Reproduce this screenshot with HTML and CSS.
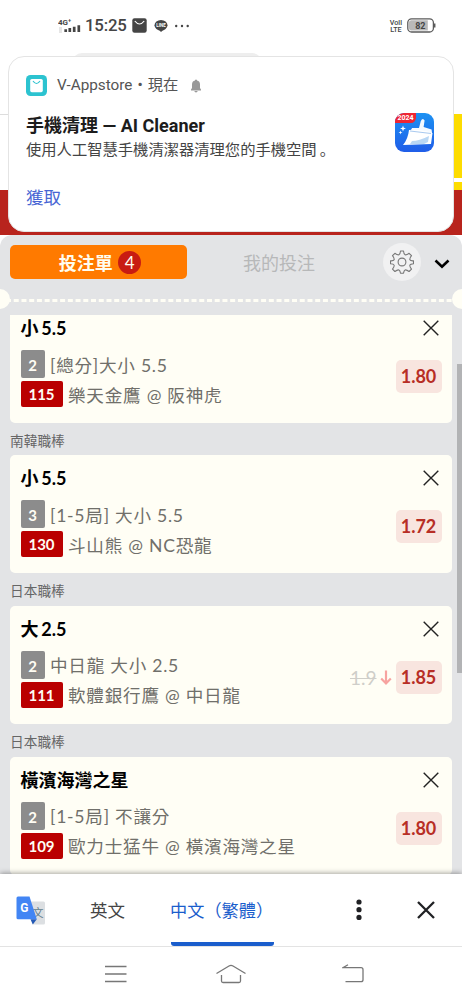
FILE: index.html
```html
<!DOCTYPE html>
<html lang="zh-Hant">
<head>
<meta charset="utf-8">
<title>投注單</title>
<link rel="stylesheet" href="styles.css">
</head>
<body>
<svg class="defs" width="0" height="0"><defs>
  <symbol id="cross" viewBox="0 0 16 16"><path d="M.7.7l14.6 14.6M15.3.7L.7 15.3" fill="none" stroke="#222" stroke-width="1.4"/></symbol>
</defs></svg>
<div class="phone">
  <header class="site">
    <div class="status">
      <svg class="signal" width="24" height="18" viewBox="0 0 24 18"><text x="0" y="7" class="net">4G⁺</text><path d="M1 10h3M1 12h3M1 14h3" stroke="#ccc" stroke-width="1"/><path d="M7.7 11.200v2.800M11.800 10v4M16.200 8.700v5.300M20.800 7.300v6.700" stroke="#454545" stroke-width="2.700"/></svg>
      <span class="time">15:25</span>
      <svg class="bag" width="15" height="15" viewBox="0 0 15 15"><rect x=".3" y=".3" width="14.4" height="14.4" rx="2.2" fill="#454545"/><path d="M2.800 3q4.700 6 9.400 0" fill="none" stroke="#fff" stroke-width="1.2"/></svg>
      <svg class="line" width="14" height="14" viewBox="0 0 14 14"><ellipse cx="7" cy="6.2" rx="6.5" ry="5.300" fill="#454545"/><path d="M5 11l2 2 4-3.4z" fill="#454545"/><text x="7" y="8" class="line-text">LINE</text></svg>
      <svg class="more" width="16" height="4" viewBox="0 0 16 4"><g fill="#454545"><circle cx="2.2" cy="2" r="1.2"/><circle cx="8" cy="2" r="1.2"/><circle cx="13.7" cy="2" r="1.2"/></g></svg>
      <span class="lte"><b>Voll</b><b>LTE</b></span>
      <svg class="battery" width="29" height="15" viewBox="0 0 29 15"><rect x=".8" y=".8" width="25.6" height="13.2" rx="3.8" fill="#fff" stroke="#5b5b5b" stroke-width="1.3"/><path d="M4 2.2h16.8v10.4H4q-2-.4-2-2V4.300q0-1.700 2-2.100z" fill="#b9b9b9"/><path d="M27.700 5.500v4" stroke="#5b5b5b" stroke-width="1.500"/><text x="13.300" y="10.500" class="pct">82</text></svg>
    </div>
    <div class="site-body"><div class="rule"></div><div class="promo"><i></i></div></div>
    <div class="site-red"></div>
    <div class="shade"></div>
    <section class="notice">
      <div class="source">
        <svg width="21" height="21" viewBox="0 0 21 21"><rect width="21" height="21" rx="4.500" fill="#2cc3d0"/><rect x="4.200" y="4" width="12.600" height="13.200" rx="1.600" fill="#fff"/><path d="M7 6q3.500 5 7 0" fill="none" stroke="#2cc3d0" stroke-width="1.200"/></svg>
        <span>V-Appstore・現在</span>
        <svg width="12" height="14" viewBox="0 0 12 14"><path d="M1 11.500v-1l1-1.500V5.500Q2 1.800 5 1.400V.700h2v.7q3 .4 3 4.100V9l1 1.500v1zM4.300 12h3.400q-.3 1.400-1.700 1.400T4.300 12z" fill="#999"/></svg>
      </div>
      <div class="message">
        <div><h1>手機清理 — AI Cleaner</h1><p>使用人工智慧手機清潔器清理您的手機空間<span class="stop" lang="zh-Hans">。</span></p></div>
        <svg width="39" height="39" viewBox="0 0 39 39"><defs><linearGradient id="sky" x2="0" y2="1"><stop stop-color="#1c91f2"/><stop offset="1" stop-color="#205de8"/></linearGradient><clipPath id="tile"><rect width="39" height="39" rx="9"/></clipPath></defs><g clip-path="url(#tile)"><rect width="39" height="39" fill="url(#sky)"/><path d="M0 0h21v5q-1 5-5 5H0z" fill="#ee2633"/><path d="M24 15l1.800-7q2-4 3.800-.4L28.600 14l8 2.500.500 4-22-2 2-3.500z" fill="#f5faff"/><path d="M14 17q10-1 23.500 3L36 31l-28 1q5-6 6-15z" fill="#fff"/><path d="M17 28q7 0 17-5l-1 6-4 2H15z" fill="#b9d7f4"/><path d="M15 18l21 2.500" stroke="#a8c9ef"/><path d="M8 12.500l.8 2.200 2.200.8-2.200.8-.8 2.200-.8-2.200-2.200-.8 2.200-.8zM5.500 17.500l.5 1.500 1.500.5-1.500.5-.5 1.500-.5-1.500-1.500-.5 1.500-.5z" fill="#fff"/><text x="2.500" y="7.200" class="year">2024</text></g></svg>
      </div>
      <div class="get">獲取</div>
    </section>
  </header>

  <main class="slip">
    <nav class="tabs">
      <div class="tab active">投注單<b>4</b></div>
      <div class="tab">我的投注</div>
      <div class="gear"><svg width="24" height="24" viewBox="1 1 24 24" fill="none" stroke="#777" stroke-width="1.1"><circle cx="13" cy="13" r="3.900"/><path d="M11.500 2h3q.3 3.300 1.600 3.800t4-1.500l2.400 2.400q-2.100 2.700-1.600 4t3.600 1.100v2.900q-3.100.3-3.600 1.400t1.600 4l-2.400 2.400q-2.800-2-4-1.500T14.500 24.200h-3q-.3-2.700-1.600-3.200t-4 1.500L3.500 20.100q2.100-2.800 1.600-4T1.500 14.700v-2.900q3.100.2 3.600-1.100t-1.600-4l2.400-2.400q2.700 2 4 1.500T11.500 2z" stroke-linejoin="round"/></svg></div>
      <svg class="chevron" width="16" height="10" viewBox="0 0 16 10"><path d="M1.500 1.500L8 7.600l6.500-6.100" fill="none" stroke="#000" stroke-width="2.600"/></svg>
    </nav>
    <div class="tear"><svg width="462" height="21"><path d="M8 11.500h446" stroke="#fffef5" stroke-width="3" stroke-dasharray="5 2.730" stroke-dashoffset="2"/><circle cx="0" cy="10" r="10" fill="#fffef5"/><circle cx="462" cy="10" r="10" fill="#fffef5"/></svg></div>
    <div class="list">
      <article class="bet first"><div class="title"><h2>小 5.5</h2><svg width="16" height="16"><use href="#cross"/></svg></div><div class="detail"><div class="lines"><p><b class="kind">2</b>[總分]大小 5.5</p><p><b class="num">115</b>樂天金鷹 @ 阪神虎</p></div><strong>1.80</strong></div></article>
      <h3>南韓職棒</h3>
      <article class="bet"><div class="title"><h2>小 5.5</h2><svg width="16" height="16"><use href="#cross"/></svg></div><div class="detail"><div class="lines"><p><b class="kind">3</b>[1-5局] 大小 5.5</p><p><b class="num">130</b>斗山熊 @ NC恐龍</p></div><strong>1.72</strong></div></article>
      <h3>日本職棒</h3>
      <article class="bet"><div class="title"><h2>大 2.5</h2><svg width="16" height="16"><use href="#cross"/></svg></div><div class="detail"><div class="lines"><p><b class="kind">2</b>中日龍 大小 2.5</p><p><b class="num">111</b>軟體銀行鷹 @ 中日龍</p></div><s>1.9</s><svg class="down" width="12" height="15" viewBox="0 0 12 15"><path d="M6 .5v13M1.200 8.500L6 13.400l4.800-4.900" fill="none" stroke="#f7a3a0" stroke-width="2.200"/></svg><strong>1.85</strong></div></article>
      <h3>日本職棒</h3>
      <article class="bet"><div class="title"><h2>橫濱海灣之星</h2><svg width="16" height="16"><use href="#cross"/></svg></div><div class="detail"><div class="lines"><p><b class="kind">2</b>[1-5局] 不讓分</p><p><b class="num">109</b>歐力士猛牛 @ 橫濱海灣之星</p></div><strong>1.80</strong></div></article>
    </div>
    <div class="scroll"></div>
  </main>

  <footer class="translate">
    <svg class="gt" width="29" height="29" viewBox="0 0 29 29"><path d="M10 5.500h17.500q1.500 0 1.500 1.500v20q0 1.500-1.500 1.500H17z" fill="#dcdfe2"/><text x="16.500" y="21" class="wen">文</text><path d="M14.500 23.200h6.300l-4 5.300z" fill="#2459b5"/><path d="M2 .5h11.500l7.300 22.700H2q-1.500 0-1.500-1.500V2Q.5.500 2 .5z" fill="#4285f4"/><text x="4.200" y="16" class="g">G</text></svg>
    <div class="lang">英文</div>
    <div class="lang on">中文（繁體）</div>
    <svg class="dots" width="6" height="22" viewBox="0 0 6 22"><g fill="#202124"><circle cx="3" cy="3" r="2.600"/><circle cx="3" cy="10.700" r="2.600"/><circle cx="3" cy="18.400" r="2.600"/></g></svg>
    <svg class="close" width="18" height="18" viewBox="0 0 18 18"><path d="M1 1l16 16M17 1L1 17" stroke="#202124" stroke-width="2.300"/></svg>
  </footer>
  <div class="system">
    <svg width="22" height="18" viewBox="0 0 22 18"><path d="M0 1.500h21.500M0 9h21.500M0 16.500h21.500" stroke="#777" stroke-width="1.400"/></svg>
    <svg class="home" width="32" height="20" viewBox="0 0 32 20"><path d="M1.500 9.500L14 2q2-1.200 4 0l12.500 7.500M6.500 11v6q0 1.500 1.500 1.500h16q1.500 0 1.500-1.500v-6" fill="none" stroke="#777" stroke-width="1.300"/></svg>
    <svg width="22" height="19" viewBox="0 0 22 19"><path d="M6 .8L1 3.700h18q2 0 2 2v10q0 2-2 2H3.500" fill="none" stroke="#777" stroke-width="1.300"/></svg>
  </div>
</div>
</body>
</html>
```
FILE: styles.css
```css
* { box-sizing: border-box; }
body { margin: 0; background: #fff; font-family: Lato, "Noto Sans CJK TC", sans-serif; }
h1, h2, h3, p { margin: 0; }
svg { display: block; flex: none; }
.defs { position: absolute; }
.phone { width: 462px; height: 1000px; display: flex; flex-direction: column; overflow: hidden; }

.site { position: relative; height: 235px; flex: none; display: flex; flex-direction: column; background: #fff; }
.status { height: 56px; padding: 16px 26px 0 58px; display: flex; align-items: flex-start; font-family: Roboto, sans-serif; color: #454545; }
.signal { margin-top: 2px; }
.net { font: 700 8px Roboto, sans-serif; fill: #454545; }
.time { margin-left: 3px; width: 43px; font-size: 16.800px; line-height: 19px; font-weight: 500; letter-spacing: -.2px; }
.bag { margin: 2px 0 0 4px; }
.line { margin: 3px 0 0 7px; }
.line-text { font: 700 4.500px Roboto, sans-serif; fill: #fff; text-anchor: middle; }
.more { margin: 8px 0 0 6px; }
.lte { margin: 3px 5px 0 auto; display: flex; flex-direction: column; align-items: center; font-size: 7.200px; line-height: 7px; }
.lte b { font-weight: 500; }
.battery { margin-top: 2px; }
.pct { font: 700 9px Roboto, sans-serif; fill: #454545; text-anchor: middle; }
.site-body { height: 134px; padding-top: 58px; display: flex; justify-content: space-between; }
.rule { width: 10px; height: 1px; background: #ddd; }
.promo { width: 8px; height: 76px; background: #fddc00; padding-top: 64px; }
.promo i { display: block; height: 4px; background: #fff; }
.site-red { flex: 1; background: #b8241d; }
.shade { position: absolute; left: 72px; top: 53px; width: 190px; height: 20px; border-radius: 10px; background: #eee; }
.notice { position: absolute; left: 8px; top: 56px; width: 446px; height: 176px; padding: 18px 19px 0 17px; border: 1px solid #e4e4e4; border-radius: 16px; background: #fff; font-family: Roboto, "Noto Sans CJK TC", sans-serif; }
.source { display: flex; align-items: center; height: 21px; color: #555; font-size: 15.300px; line-height: 21px; }
.source span { margin: 0 12px 0 10px; }
.message { display: flex; justify-content: space-between; margin-top: 17px; }
.message h1 { font-size: 18px; line-height: 24px; padding-top: 1px; font-weight: 700; color: #1c1c1c; }
.message p { height: 22px; font-size: 15.300px; line-height: 21px; color: #444; }
.stop { font-family: "Noto Sans CJK SC", sans-serif; margin-left: 3px; }
.year { font: 700 7px Roboto, sans-serif; fill: #fff; }
.get { margin-top: 26px; font-size: 17.500px; line-height: 24px; color: #4865d4; }

.slip { position: relative; height: 639px; flex: none; overflow: hidden; background: #e3e4e6; border-radius: 12px 12px 0 0; }
.tabs { height: 54px; padding: 0 12px 0 10px; display: flex; align-items: center; }
.tab { width: 184px; height: 34px; display: flex; align-items: center; justify-content: center; font-size: 18px; color: #b7b8b9; }
.tab.active { width: 177px; padding-left: 3px; border-radius: 5px; background: #ff7a00; color: #fffdf0; font-weight: 700; }
.tab b { width: 23px; height: 23px; margin-left: 5.500px; border-radius: 50%; background: #c81c12; font-size: 17px; line-height: 23px; font-weight: 400; text-align: center; }
.gear { width: 38px; height: 38px; margin-left: 12px; border-radius: 50%; background: #f1f1f2; display: flex; align-items: center; justify-content: center; }
.chevron { margin-left: 13px; margin-top: 3px; }
.tear { height: 26px; }
.list { height: 559px; padding: 0 10px; overflow: hidden; }
.bet { width: 442px; height: 118px; border-radius: 5px; background: #fffef5; padding: 10px 11px 0 10.500px; }
.bet.first { height: 107.500px; padding-top: 0; border-radius: 0 0 5px 5px; }
.title { height: 26px; padding: 0 2.500px 0 0; display: flex; justify-content: space-between; align-items: center; }
.title h2 { font-size: 18px; font-weight: 700; line-height: 26px; color: #000; word-spacing: -1.500px; }
.detail { display: flex; align-items: center; height: 71px; margin-right: -.5px; }
.lines { flex: 1; padding-top: 5px; }
.lines p { display: flex; align-items: center; height: 30px; font-size: 17.600px; letter-spacing: .75px; color: #706f6a; font-weight: 400; white-space: nowrap; }
.lines b { color: #fffdf4; border-radius: 2px; letter-spacing: 0; text-align: center; }
.kind { width: 24px; height: 28px; margin-right: 5.500px; font-size: 15px; line-height: 30px; background: #8c8c8c; }
.num { width: 42px; height: 26px; margin-right: 5.500px; font-size: 15px; line-height: 27px; background: #ba0000; }
.detail strong { width: 46px; height: 33px; border-radius: 5px; background: #f8e5df; color: #b72e25; font-size: 18px; line-height: 33px; text-align: center; }
.detail s { font-size: 19px; color: #cfcec9; }
.down { margin: 0 4px 0 3px; }
.list h3 { height: 32.700px; font-size: 13.700px; line-height: 36px; font-weight: 400; color: #666; }
.scroll { position: absolute; right: 0; top: 129px; width: 5px; height: 309px; background: #b2b3b5; }

.translate { position: relative; height: 73px; flex: none; padding: 0 27px 0 16px; display: flex; align-items: center; background: #fff; border-bottom: 1px solid #e3e3e3; box-shadow: 0 -1px 5px rgba(0,0,0,.35); font-size: 17.500px; color: #444; }
.lang { margin-left: 45px; height: 72px; line-height: 73px; }
.lang.on { width: 103px; margin-left: 46px; border-bottom: 4px solid #1a5dcc; border-radius: 3px; color: #1a5dcc; font-size: 17.200px; text-indent: -1px; white-space: nowrap; }
.dots { margin-left: auto; }
.close { margin-left: 55px; }
.system { position: relative; flex: 1; padding: 0 98px 0 105px; display: flex; align-items: center; justify-content: space-between; background: #fff; }
.home { margin-right: 8px; }
.g { font: 700 12px Roboto, sans-serif; fill: #fff; }
.wen { font: 400 11px "Noto Sans CJK TC", sans-serif; fill: #607d8b; }
```
